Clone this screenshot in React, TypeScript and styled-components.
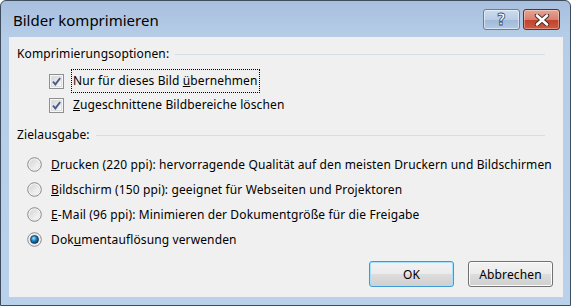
import styled, { createGlobalStyle } from 'styled-components'

const GlobalStyle = createGlobalStyle`
    html, body {
        margin: 0;
        padding: 0;
        background: #ffffff;
    }
    body {
        font-family: "Noto Sans", "Open Sans", sans-serif;
        font-size: 12px;
        letter-spacing: 0.12px;
        color: #000;
    }
`

type CheckItem = { before: string; key: string; after: string; focused?: boolean }
type RadioItem = { before: string; key: string; after: string; checked?: boolean }

const checks: CheckItem[] = [
    { before: 'Nur für dieses Bild ', key: 'ü', after: 'bernehmen', focused: true },
    { before: '', key: 'Z', after: 'ugeschnittene Bildbereiche löschen' },
]

const radios: RadioItem[] = [
    { before: '', key: 'D', after: 'rucken (220 ppi): hervorragende Qualität auf den meisten Druckern und Bildschirmen' },
    { before: '', key: 'B', after: 'ildschirm (150 ppi): geeignet für Webseiten und Projektoren' },
    { before: '', key: 'E', after: '-Mail (96 ppi): Minimieren der Dokumentgröße für die Freigabe' },
    { before: 'Dok', key: 'u', after: 'mentauflösung verwenden', checked: true },
]

const CheckIcon = () => (
    <svg width="15" height="15" viewBox="0 0 15 15">
        <defs>
            <linearGradient id="cbfill" x1="0" y1="0" x2="1" y2="1">
                <stop offset="0" stopColor="#d6d6d6" />
                <stop offset="1" stopColor="#fafafa" />
            </linearGradient>
        </defs>
        <rect x="0.5" y="0.5" width="14" height="14" fill="#f6f6f6" stroke="#8e8f8f" />
        <rect x="2.5" y="2.5" width="10" height="10" fill="url(#cbfill)" stroke="#dedede" />
        <path d="M4 7.6 L6.4 10.4 L11.2 4" fill="none" stroke="#4a5d8a" strokeWidth="1.9" />
    </svg>
)

const RadioIcon = ({ checked }: { checked?: boolean }) => (
    <svg width="15" height="15" viewBox="0 0 15 15">
        <defs>
            <linearGradient id="rbring" x1="0" y1="0" x2="1" y2="1">
                <stop offset="0" stopColor="#d4d4d4" />
                <stop offset="1" stopColor="#fbfbfb" />
            </linearGradient>
            <radialGradient id="rbdot" cx="0.4" cy="0.35" r="0.7">
                <stop offset="0" stopColor="#a8e6ff" />
                <stop offset="0.45" stopColor="#1d86c6" />
                <stop offset="1" stopColor="#0a2b56" />
            </radialGradient>
        </defs>
        <circle cx="7.5" cy="7.5" r="6.8" fill="#f4f4f4" stroke="#8a8a8a" />
        <circle cx="7.5" cy="7.5" r="5" fill="url(#rbring)" stroke="#e4e4e4" strokeWidth="0.8" />
        {checked && <circle cx="7.5" cy="7.5" r="4" fill="url(#rbdot)" stroke="#1b3552" strokeWidth="0.8" />}
    </svg>
)

const App = () => {
    return (
        <>
            <GlobalStyle />
            <Window>
                <TitleBar>
                    <Title>Bilder komprimieren</Title>
                    <CaptionButtons>
                        <HelpButton>?</HelpButton>
                        <CloseButton>
                            <svg width="16" height="12" viewBox="0 0 16 12">
                                <path d="M3 1.5 L13 10.5 M13 1.5 L3 10.5" stroke="#3a2a2a" strokeWidth="4.4" strokeLinecap="round" />
                                <path d="M3 1.5 L13 10.5 M13 1.5 L3 10.5" stroke="#ffffff" strokeWidth="2.6" strokeLinecap="round" />
                            </svg>
                        </CloseButton>
                    </CaptionButtons>
                </TitleBar>
                <Client>
                    <GroupHeader>
                        <span>Komprimierungsoptionen:</span>
                        <Rule />
                    </GroupHeader>
                    <CheckList>
                        {checks.map((c) => (
                            <CheckRow key={c.after}>
                                <CheckIcon />
                                <OptionLabel $focused={c.focused}>
                                    {c.before}
                                    <Key>{c.key}</Key>
                                    {c.after}
                                </OptionLabel>
                            </CheckRow>
                        ))}
                    </CheckList>
                    <GroupHeader $second>
                        <span>Zielausgabe:</span>
                        <Rule />
                    </GroupHeader>
                    <RadioList>
                        {radios.map((r) => (
                            <RadioRow key={r.after}>
                                <RadioIcon checked={r.checked} />
                                <span>
                                    {r.before}
                                    <Key>{r.key}</Key>
                                    {r.after}
                                </span>
                            </RadioRow>
                        ))}
                    </RadioList>
                    <ButtonRow>
                        <DialogButton $default>OK</DialogButton>
                        <DialogButton>Abbrechen</DialogButton>
                    </ButtonRow>
                </Client>
            </Window>
        </>
    )
}

const Window = styled.div`
    width: 571px;
    height: 306px;
    box-sizing: border-box;
    border: 1px solid #3d4d5e;
    border-radius: 6px 6px 0 0;
    background: linear-gradient(#a8c0de 0px, #b6cde8 36px, #b9d1ea 100%);
    display: flex;
    flex-direction: column;
`

const TitleBar = styled.div`
    height: 35px;
    display: flex;
    align-items: center;
    padding: 0 10px 0 12px;
    box-sizing: border-box;
`

const Title = styled.div`
    flex: 1;
    font-size: 15px;
    letter-spacing: 0;
    color: #000;
    padding-top: 2px;
`

const CaptionButtons = styled.div`
    display: flex;
    gap: 3px;
    padding-top: 2px;
`

const CaptionButton = styled.div`
    width: 37px;
    height: 21px;
    box-sizing: border-box;
    border-radius: 3px;
    display: flex;
    align-items: center;
    justify-content: center;
`

const HelpButton = styled(CaptionButton)`
    border: 1px solid #6a7d96;
    background: linear-gradient(#cddcee 0%, #b9cde6 50%, #a0b9d8 51%, #b3c9e3 100%);
    box-shadow: inset 0 0 0 1px rgba(255, 255, 255, 0.5);
    font-family: "DejaVu Sans", sans-serif;
    font-weight: bold;
    font-size: 15px;
    color: #fff;
    -webkit-text-stroke: 0.8px #3d4a5c;
`

const CloseButton = styled(CaptionButton)`
    border: 1px solid #6d2a20;
    background: linear-gradient(#e8a493 0%, #d98070 50%, #c1412b 51%, #cf5a3f 100%);
    box-shadow: inset 0 0 0 1px rgba(255, 255, 255, 0.35);
`

const Client = styled.div`
    flex: 1;
    margin: 1px 7px 8px 8px;
    background: #f0f0f0;
    padding: 10px 10px 0 8px;
    display: flex;
    flex-direction: column;
`

const GroupHeader = styled.div<{ $second?: boolean }>`
    display: flex;
    align-items: center;
    height: 14px;
    line-height: 14px;
    margin-top: ${(p) => (p.$second ? '11px' : '0')};
    padding-right: 8px;
`

const Rule = styled.div`
    flex: 1;
    height: 1px;
    margin-left: 6px;
    margin-top: 1px;
    background: #d5dfe5;
`

const CheckList = styled.div`
    margin-top: 8px;
    display: flex;
    flex-direction: column;
`

const CheckRow = styled.div`
    height: 24px;
    display: flex;
    align-items: center;
    padding-left: 32px;
    gap: 9px;
`

const OptionLabel = styled.span<{ $focused?: boolean }>`
    padding: 2px 1px 3px 1px;
    margin-left: -2px;
    border: 1px dotted ${(p) => (p.$focused ? '#000' : 'transparent')};
`

const RadioList = styled.div`
    margin-top: 10px;
    display: flex;
    flex-direction: column;
`

const RadioRow = styled.div`
    height: 25px;
    display: flex;
    align-items: center;
    padding-left: 10px;
    gap: 9px;
`

const Key = styled.span`
    text-decoration: underline;
`

const ButtonRow = styled.div`
    margin-top: 9px;
    display: flex;
    justify-content: flex-end;
    gap: 14px;
`

const DialogButton = styled.div<{ $default?: boolean }>`
    width: 85px;
    height: 26px;
    box-sizing: border-box;
    border-radius: 3px;
    border: 1px solid ${(p) => (p.$default ? '#3c9ad8' : '#707070')};
    box-shadow: inset 0 0 0 1px ${(p) => (p.$default ? '#a7e0fb' : '#fcfcfc')};
    background: linear-gradient(#f2f2f2 0%, #ebebeb 50%, #dddddd 51%, #cfcfcf 100%);
    display: flex;
    align-items: center;
    justify-content: center;
`

export default App
